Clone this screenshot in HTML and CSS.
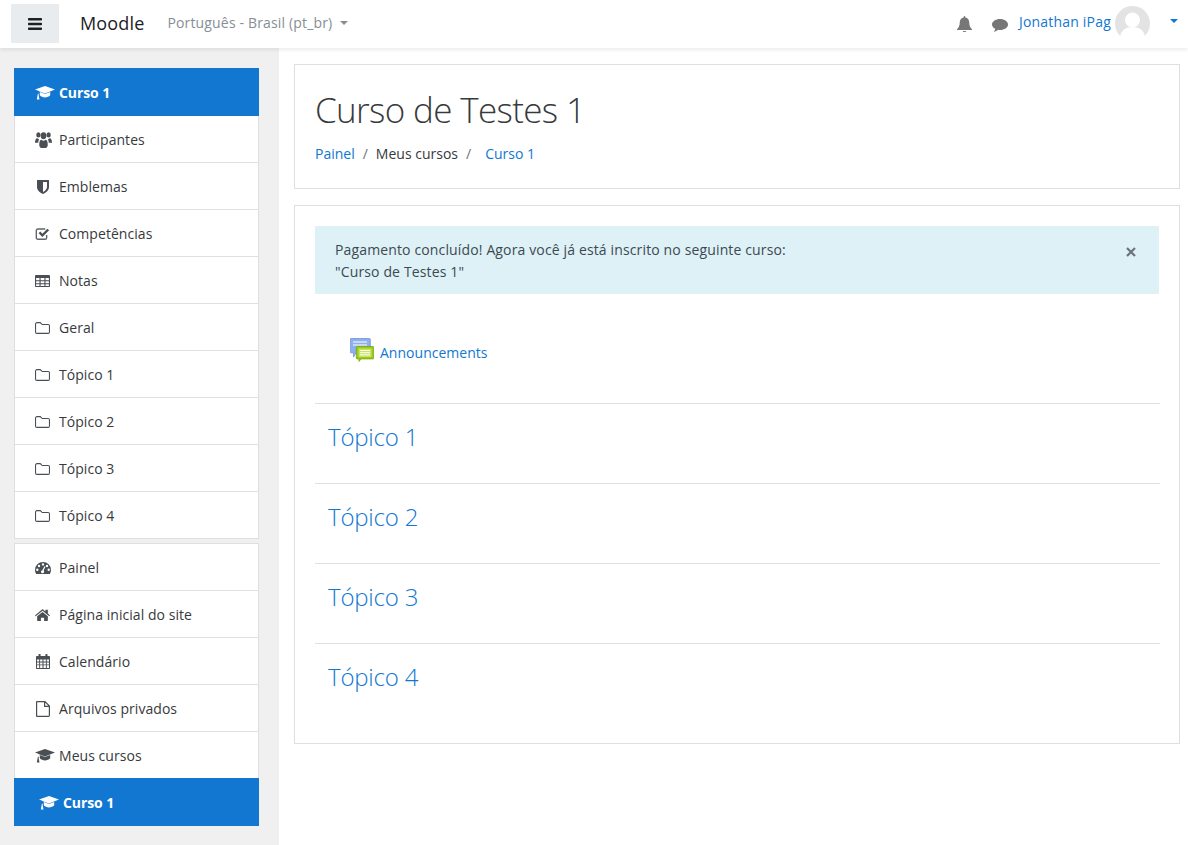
FILE: index.html
```html
<!DOCTYPE html>
<html lang="pt-BR">
<head>
<meta charset="utf-8">
<title>Curso de Testes 1</title>
<link rel="stylesheet" href="styles.css">
</head>
<body>
<svg class="defs" width="0" height="0" aria-hidden="true">
  <symbol id="i-cap" viewBox="0 0 20 14" preserveAspectRatio="none"><path d="M10 0 0 3.600l3.300 1.200v2.700c-.5.300-.8.800-.6 1.300L1.800 13.500h2.700l-.9-4.700c.3-.4.200-1-.3-1.300V5.100L10 7.400l10-3.800zM4.800 6v3.200c1.200 1.400 3.200 2.200 5.200 2.200s4-.8 5.200-2.200V6L10 8z"/></symbol>
  <symbol id="i-users" viewBox="0 0 18 14" preserveAspectRatio="none"><circle cx="3.600" cy="2.600" r="2.300"/><circle cx="14.400" cy="2.600" r="2.300"/><circle cx="9" cy="3.300" r="3"/><path d="M0 9.500C0 7 1 5.500 2.300 5.500c.6 0 1.200.8 2 1-.6.800-.9 1.700-.9 3H.9c-.5 0-.9.300-.9 0zM18 9.500C18 7 17 5.500 15.700 5.500c-.6 0-1.200.8-2 1 .6.800.9 1.700.9 3h2.500c.5 0 .9.300.9 0zM4.500 11c0-3 1.200-4.200 2.200-4.200.7.500 1.400.8 2.300.8s1.600-.3 2.300-.8c1 0 2.200 1.200 2.200 4.200 0 1.800-1 3-2.300 3H6.800c-1.300 0-2.300-1.200-2.300-3z"/></symbol>
  <symbol id="i-shield" viewBox="0 0 12 14"><path fill-rule="evenodd" d="M.5 0h11c.3 0 .5.200.5.500V7c0 3.500-3.500 6-6 7-2.500-1-6-3.500-6-7V.5C0 .2.200 0 .5 0zM6 2v10c1.800-.9 4-2.800 4-5V2z"/></symbol>
  <symbol id="i-check" viewBox="0 0 16 13"><path fill="none" stroke="#5f656b" stroke-width="1.500" d="M12.500 7.500v3c0 1-.7 1.700-1.700 1.700H3c-1 0-1.700-.7-1.700-1.700V2.800c0-1 .7-1.700 1.700-1.700h8"/><path d="m3.800 5.600 1.800-1.700 2.300 2.300L13.300 .8 15.200 2.500 7.900 9.800z"/></symbol>
  <symbol id="i-table" viewBox="0 0 15 12"><path fill-rule="evenodd" d="M1.100 0h12.800c.6 0 1.100.5 1.100 1.100v9.800c0 .6-.5 1.100-1.100 1.100H1.100C.5 12 0 11.500 0 10.900V1.100C0 .5.500 0 1.100 0zM1.100 3.100v2.100h3.400V3.100zm4.500 0v2.100h3.800V3.100zm4.900 0v2.100h3.400V3.100zM1.100 6.200v2h3.400v-2zm4.500 0v2h3.800v-2zm4.900 0v2h3.400v-2zM1.100 9.200v1.700h3.400V9.200zm4.500 0v1.700h3.800V9.200zm4.900 0v1.700h3.400V9.200z"/></symbol>
  <symbol id="i-folder" viewBox="0 0 14 11"><path fill="none" stroke="currentColor" stroke-width="1" d="M1.800.5h2.700c.7 0 1.100.4 1.300.9.200.4.400.8 1 .8h5.400c.7 0 1.300.6 1.300 1.300v5.700c0 .7-.6 1.300-1.300 1.300H1.800c-.7 0-1.300-.6-1.300-1.300V1.800C.5 1.100 1.100.5 1.800.5z"/></symbol>
  <symbol id="i-gauge" viewBox="0 0 16 12"><path fill-rule="evenodd" d="M8 0a8 8 0 0 1 8 8c0 1.500-.4 2.800-1.100 3.900-.1.100-.2.100-.4.100h-13c-.2 0-.3 0-.4-.1A8 8 0 0 1 0 8a8 8 0 0 1 8-8zM8 1.200a1.200 1.200 0 1 0 0 2.400 1.200 1.200 0 0 0 0-2.400zM4 2.800a1.200 1.200 0 1 0 0 2.400 1.200 1.200 0 0 0 0-2.400zm8 0a1.200 1.200 0 1 0 0 2.400 1.200 1.200 0 0 0 0-2.400zM2.300 6.500a1.200 1.200 0 1 0 0 2.400 1.200 1.200 0 0 0 0-2.400zm11.400 0a1.200 1.200 0 1 0 0 2.400 1.200 1.200 0 0 0 0-2.400zM9.500 4.300 7.300 8.200c-.9.200-1.500 1-1.300 1.800.2.900 1.100 1.400 1.900 1.200s1.400-1 1.200-1.900c-.1-.3-.3-.6-.5-.8l1.900-3.700z"/></symbol>
  <symbol id="i-home" viewBox="0 0 14 11"><path d="M7 2.600 2 6.700v3.800c0 .3.200.5.500.5h3V8h3v3h3c.3 0 .5-.2.500-.5V6.700zM14 5.900 12 4.200V.8c0-.2-.1-.3-.3-.3H10c-.2 0-.3.100-.3.300v1.500L7.500.4C7.200.1 6.800.1 6.500.4L0 5.900l.7.800L7 1.500l6.300 5.200z"/></symbol>
  <symbol id="i-cal" viewBox="0 0 14 15"><path fill-rule="evenodd" d="M3 0h1.100c.3 0 .5.200.5.500V2h4.800V.5c0-.3.200-.5.500-.5H11c.3 0 .5.200.5.500V2H13c.6 0 1 .5 1 1.100v10.800c0 .6-.4 1.100-1 1.100H1c-.6 0-1-.5-1-1.100V3.100C0 2.500.4 2 1 2h1.500V.5C2.500.2 2.700 0 3 0zM1 5.500v2h2.200v-2zm3.100 0v2h2.400v-2zm3.400 0v2h2.400v-2zm3.300 0v2H13v-2zM1 8.400v2h2.200v-2zm3.100 0v2h2.400v-2zm3.400 0v2h2.400v-2zm3.300 0v2H13v-2zM1 11.300v2.600h2.200v-2.600zm3.100 0v2.600h2.400v-2.600zm3.400 0v2.600h2.400v-2.600zm3.300 0v2.600H13v-2.600z"/></symbol>
  <symbol id="i-file" viewBox="0 0 14 16"><path fill="none" stroke="currentColor" stroke-width="1.200" d="M1 .6h8l4.400 4.400v9.200c0 .6-.4 1.200-1 1.200H1c-.3 0-.4-.2-.4-.4V1c0-.2.200-.4.400-.4zM8.600.8v4.600h4.600"/></symbol>
  <symbol id="i-bell" viewBox="0 0 15 16"><path d="M7.500 0c.5 0 .8.300.8.800v.6c2.300.4 3.900 2.300 3.900 4.700 0 4 1.200 5.600 2.800 7.100v.8H0v-.8c1.600-1.500 2.800-3.100 2.800-7.100 0-2.400 1.600-4.300 3.900-4.700V.8c0-.5.300-.8.800-.8zM5.800 15h3.400c0 .6-.8 1-1.700 1s-1.700-.4-1.700-1z"/></symbol>
  <symbol id="i-chat" viewBox="0 0 16 13"><path d="M8 0c4.400 0 8 2.400 8 5.500S12.400 11 8 11c-.7 0-1.400-.1-2-.2C5 11.800 3.600 12.700 1.800 13c.6-.9 1.300-2 1.400-3.200C1.300 8.800 0 7.300 0 5.500 0 2.400 3.600 0 8 0z"/></symbol>
  <symbol id="i-bars" viewBox="0 0 14 12"><path d="M.7 0h12.600c.4 0 .7.300.7.700v1c0 .4-.3.700-.7.700H.7c-.4 0-.7-.3-.7-.7v-1C0 .3.300 0 .7 0zm0 4.800h12.600c.4 0 .7.300.7.700v1c0 .4-.3.700-.7.700H.7c-.4 0-.7-.3-.7-.7v-1c0-.4.300-.7.700-.7zm0 4.800h12.600c.4 0 .7.300.7.700v1c0 .4-.3.700-.7.700H.7c-.4 0-.7-.3-.7-.7v-1c0-.4.300-.7.700-.7z"/></symbol>
</svg>

<header class="navbar">
  <button class="menu-btn" type="button" aria-label="Menu"><svg class="bars"><use href="#i-bars"/></svg></button>
  <a class="brand">Moodle</a>
  <span class="lang">Português - Brasil ‎(pt_br)‎<i class="caret caret-gray"></i></span>
  <div class="usernav">
    <svg class="bell"><use href="#i-bell"/></svg>
    <svg class="chat"><use href="#i-chat"/></svg>
    <a class="username">Jonathan iPag</a>
    <svg class="avatar" viewBox="0 0 35 35"><circle cx="17.500" cy="17.500" r="17.500" fill="#e3e3e3"/><circle cx="17.500" cy="14" r="7.500" fill="#fff"/><path d="M5 31c1-7 6-10 12.500-10S29 24 30 31a17.500 17.500 0 0 1-25 0z" fill="#fff"/></svg>
    <i class="caret caret-blue"></i>
  </div>
</header>

<div class="page">
  <aside class="sidebar">
    <nav class="nav-card">
      <a class="nav-item active"><svg class="ico ico-cap"><use href="#i-cap"/></svg>Curso 1</a>
      <a class="nav-item"><svg class="ico ico-users"><use href="#i-users"/></svg>Participantes</a>
      <a class="nav-item"><svg class="ico ico-shield"><use href="#i-shield"/></svg>Emblemas</a>
      <a class="nav-item"><svg class="ico ico-check"><use href="#i-check"/></svg>Competências</a>
      <a class="nav-item"><svg class="ico ico-table"><use href="#i-table"/></svg>Notas</a>
      <a class="nav-item"><svg class="ico ico-folder"><use href="#i-folder"/></svg>Geral</a>
      <a class="nav-item"><svg class="ico ico-folder"><use href="#i-folder"/></svg>Tópico 1</a>
      <a class="nav-item"><svg class="ico ico-folder"><use href="#i-folder"/></svg>Tópico 2</a>
      <a class="nav-item"><svg class="ico ico-folder"><use href="#i-folder"/></svg>Tópico 3</a>
      <a class="nav-item"><svg class="ico ico-folder"><use href="#i-folder"/></svg>Tópico 4</a>
    </nav>
    <nav class="nav-card">
      <a class="nav-item"><svg class="ico ico-gauge"><use href="#i-gauge"/></svg>Painel</a>
      <a class="nav-item"><svg class="ico ico-home"><use href="#i-home"/></svg>Página inicial do site</a>
      <a class="nav-item"><svg class="ico ico-cal"><use href="#i-cal"/></svg>Calendário</a>
      <a class="nav-item"><svg class="ico ico-file"><use href="#i-file"/></svg>Arquivos privados</a>
      <a class="nav-item"><svg class="ico ico-cap"><use href="#i-cap"/></svg>Meus cursos</a>
      <a class="nav-item active nested"><svg class="ico ico-cap"><use href="#i-cap"/></svg>Curso 1</a>
    </nav>
  </aside>

  <main class="main">
    <section class="card head-card">
      <h1 class="title">Curso de Testes 1</h1>
      <ol class="crumbs">
        <li><a>Painel</a></li>
        <li class="sep">/</li>
        <li>Meus cursos</li>
        <li class="sep">/</li>
        <li class="last"><a>Curso 1</a></li>
      </ol>
    </section>
    <section class="card body-card">
      <div class="alert">
        <p>Pagamento concluído! Agora você já está inscrito no seguinte curso:<br>"Curso de Testes 1"</p>
        <svg class="close" viewBox="0 0 10 10"><path d="M1 1l8 8M9 1l-8 8"/></svg>
      </div>
      <div class="activity">
        <svg class="forum" viewBox="0 0 24 24">
          <path d="M1 .5h18.500c.5 0 .8.300.8.800V14c0 .5-.3.800-.8.800H6L3.500 19v-4.200H1c-.5 0-.8-.3-.8-.8V1.300C.2.800.5.500 1 .5z" fill="#8fb0ee" stroke="#6f93dc" stroke-width=".8"/>
          <path d="M3 4h14M3 7h14" stroke="#fff" stroke-width="1.200"/>
          <path d="M7 8.500h16c.4 0 .7.300.7.700v11c0 .4-.3.700-.7.700H11l-2 2.600V20.900H7c-.4 0-.7-.3-.7-.7v-11c0-.4.300-.7.700-.7z" fill="#9acb1c" stroke="#7ba510" stroke-width=".8"/>
          <rect x="8.500" y="10.500" width="13" height="8.500" fill="#c5e55e"/>
          <path d="M10 12.500h10M10 14.700h10M10 16.900h10" stroke="#fff" stroke-width="1"/>
        </svg>
        <a>Announcements</a>
      </div>
      <h3 class="topic"><a>Tópico 1</a></h3>
      <h3 class="topic"><a>Tópico 2</a></h3>
      <h3 class="topic"><a>Tópico 3</a></h3>
      <h3 class="topic"><a>Tópico 4</a></h3>
    </section>
  </main>
</div>
</body>
</html>
```

FILE: styles.css
```css
* { box-sizing: border-box; }
html, body { height: 100%; }
body {
  margin: 0;
  overflow: hidden;
  background: #fff;
  color: #373a3c;
  font-family: "Open Sans", "Noto Sans", sans-serif;
  font-size: 14px;
  letter-spacing: 0;
  line-height: 22px;
}
.defs { position: absolute; }
a { color: #1177d1; text-decoration: none; }

.navbar {
  position: relative;
  z-index: 2;
  display: flex;
  align-items: center;
  height: 48px;
  padding: 0 10px 0 11px;
  background: #fff;
  box-shadow: 0 2px 4px rgba(0, 0, 0, .08);
}
.menu-btn {
  display: flex;
  align-items: center;
  justify-content: center;
  width: 48px;
  height: 39px;
  margin: -1px 21px 0 0;
  padding: 0;
  background: #e9ecef;
  border: 0;
}
.bars { width: 14px; height: 12px; fill: #1d2125; }
.brand { color: #1d2125; font-size: 18px; letter-spacing: .15px; margin: -2px 23px 0 0; }
.lang { display: flex; align-items: center; margin: -2px 0 0 0; color: #868e96; letter-spacing: .16px; }
.caret { display: inline-block; width: 0; height: 0; border-style: solid; border-width: 4.500px 4.500px 0; border-color: transparent; }
.caret-gray { border-top-color: #868e96; margin-left: 8px; }
.caret-blue { border-top-color: #1177d1; margin: -6px 0 0 20px; }
.usernav { display: flex; align-items: center; margin-left: auto; }
.bell { width: 15px; height: 16px; fill: #777; margin-right: 20px; }
.chat { width: 16px; height: 13px; fill: #777; margin: 3px 11px 0 0; }
.username { margin-top: -4px; letter-spacing: .2px; }
.avatar { width: 35px; height: 35px; margin: 0 0 1px 4px; }

.page { display: flex; height: calc(100% - 48px); }
.sidebar {
  flex: 0 0 279px;
  padding: 20px 20px 0 14px;
  background: #f0f0f0;
}
.nav-card { display: flex; flex-direction: column; margin-bottom: 4px; }
.nav-item {
  display: flex;
  align-items: center;
  height: 47px;
  padding: 1px 0 0 20px;
  color: #373a3c;
  background: #fff;
  border: 1px solid #dfdfdf;
  border-top: 0;
  letter-spacing: .05px;
}
.nav-card:nth-child(2) .nav-item:first-child { height: 48px; padding-top: 2px; border-top: 1px solid #dfdfdf; }
.nav-item.active {
  height: 48px;
  padding-top: 2px;
  color: #fff;
  font-weight: 700;
  background: #1177d1;
  border-color: #1177d1;
  letter-spacing: -.1px;
}
.nav-item.nested { margin-top: -1px; padding-left: 24px; }
.ico { flex: none; margin-right: 9px; fill: currentColor; color: #4a4f54; }
.active .ico { color: #fff; }
.ico-cap { width: 20px; height: 14px; margin-right: 4px; }
.ico-users { width: 17px; height: 16px; margin-right: 7px; }
.ico-shield { width: 12px; height: 14px; margin: 0 10px 0 2px; }
.ico-check { width: 15px; height: 12px; margin-right: 9px; }
.ico-table { width: 15px; height: 12px; margin-right: 9px; }
.ico-folder { width: 15px; height: 12px; margin-right: 9px; }
.ico-gauge { width: 16px; height: 12px; margin-right: 8px; }
.ico-home { width: 15px; height: 12px; margin-right: 9px; }
.ico-cal { width: 14px; height: 15px; margin: 0 9px 0 1px; }
.ico-file { width: 14px; height: 16px; margin: 0 9px 0 1px; }

.main { flex: 1; padding: 16px 8px 0 15px; }
.card { background: #fff; border: 1px solid #dfdfdf; }
.head-card { height: 125px; padding: 20px; margin-bottom: 16px; }
.title {
  margin: 0 0 8px;
  color: #373a3c;
  font-size: 35px;
  font-weight: 300;
  letter-spacing: -.65px;
  line-height: 50px;
}
.crumbs { display: flex; margin: 0; padding: 0; list-style: none; }
.sep { padding: 0 8px; color: #6a737b; }
.last { padding-left: 6px; }

.body-card { height: 539px; padding: 20px 20px 0; }
.alert {
  display: flex;
  justify-content: space-between;
  align-items: flex-start;
  height: 68px;
  padding: 13px 20px 0;
  background: #def1f7;
  color: #3c4a50;
  letter-spacing: .14px;
}
.alert p { margin: 0; }
.close { width: 10px; height: 10px; margin: 8px 3px 0 0; fill: none; stroke: #6b7479; stroke-width: 2.200; }
.activity {
  display: flex;
  align-items: center;
  gap: 6px;
  height: 110px;
  margin-right: -1px;
  padding: 9px 0 0 35px;
  border-bottom: 1px solid #dfdfdf;
  letter-spacing: .02px;
}
.forum { width: 24px; height: 24px; margin-top: -6px; }
.topic {
  height: 80px;
  margin: 0 -1px 0 0;
  padding: 16px 13px 0;
  font-size: 24px;
  font-weight: 300;
  letter-spacing: -.2px;
  line-height: 34px;
  border-bottom: 1px solid #dfdfdf;
}
.topic:last-child { border-bottom: 0; }
```
